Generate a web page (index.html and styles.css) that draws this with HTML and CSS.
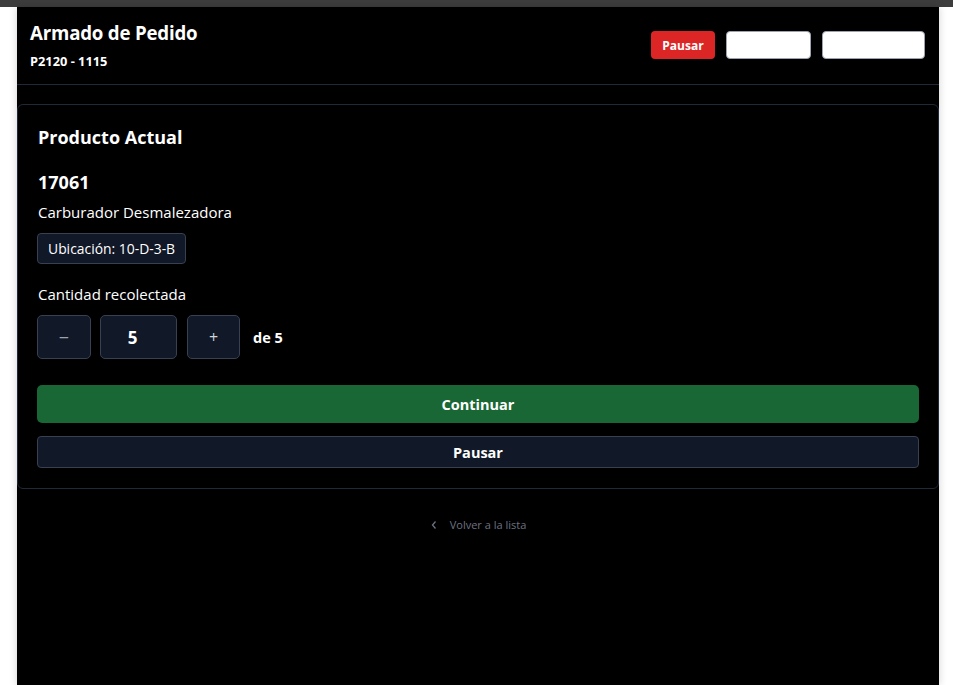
FILE: index.html
```html
<!DOCTYPE html>
<html lang="es">
<head>
<meta charset="utf-8">
<title>Armado de Pedido</title>
<link rel="stylesheet" href="styles.css">
</head>
<body>
<div class="topbar"></div>
<div class="app">
  <header class="header">
    <div class="titles">
      <h1 class="title">Armado de Pedido</h1>
      <div class="subtitle">P2120 - 1115</div>
    </div>
    <div class="actions">
      <button class="btn-red">Pausar</button>
      <button class="btn-white w1"></button>
      <button class="btn-white w2"></button>
    </div>
  </header>
  <main class="main">
    <section class="card">
      <h2 class="card-title">Producto Actual</h2>
      <div class="code">17061</div>
      <div class="desc">Carburador Desmalezadora</div>
      <div class="badge">Ubicación: 10-D-3-B</div>
      <div class="qty-label">Cantidad recolectada</div>
      <div class="qty-row">
        <button class="qbtn minus">−</button>
        <div class="qinput">5</div>
        <button class="qbtn plus">+</button>
        <span class="of">de 5</span>
      </div>
      <button class="btn-continue">Continuar</button>
      <button class="btn-pause">Pausar</button>
    </section>
    <div class="back">
      <svg class="chev" width="8" height="10" viewBox="0 0 8 10"><path d="M5.5 1.5 L2.5 5 L5.5 8.5" fill="none" stroke="#6b7280" stroke-width="1.3"/></svg>
      <span>Volver a la lista</span>
    </div>
  </main>
</div>
</body>
</html>
```
FILE: styles.css
```css
* { box-sizing: border-box; }
html, body { margin: 0; padding: 0; }
body {
  background: #ffffff;
  font-family: "Open Sans", "Noto Sans", sans-serif;
  color: #ffffff;
  height: 685px;
  overflow: hidden;
}
.topbar { height: 7px; background: #3d3d3d; }
.app {
  margin-left: 17px;
  width: 922px;
  height: 678px;
  background: #000000;
  box-shadow: 0 0 8px rgba(0,0,0,0.18);
}
.header {
  display: flex;
  justify-content: space-between;
  align-items: center;
  padding: 12px 14px 13px 13px;
  border-bottom: 1px solid #1f2937;
}
.title { margin: 0; font-size: 18.7px; line-height: 28px; font-weight: 700; letter-spacing: -0.2px; }
.subtitle { margin-top: 4px; font-size: 12.8px; line-height: 20px; font-weight: 700; }
.actions { display: flex; gap: 11px; }
button { font-family: inherit; cursor: pointer; }
.btn-red {
  width: 64px; height: 28px; border: none; border-radius: 4px;
  background: #dc2626; color: #fff; font-size: 12px; font-weight: 700;
}
.btn-white {
  height: 28px; background: #fff; border: 1px solid #9ca3af; border-radius: 4px;
}
.w1 { width: 85px; }
.w2 { width: 103px; }
.main { padding-top: 19px; }
.card {
  border: 1px solid #1f2937;
  border-radius: 6px;
  padding: 18px 19px 20px 19px;
  display: flex;
  flex-direction: column;
  align-items: flex-start;
}
.card-title { margin: 0 0 0 1px; font-size: 18px; line-height: 28px; font-weight: 700; }
.code { margin: 17px 0 0 1px; font-size: 18px; line-height: 28px; font-weight: 700; }
.desc { margin: 4px 0 0 1px; font-size: 15px; line-height: 24px; }
.badge {
  margin-top: 9px;
  height: 31px;
  padding: 0 10px;
  display: flex; align-items: center;
  background: #111827; border: 1px solid #374151; border-radius: 4px;
  font-size: 13.9px;
}
.qty-label { margin: 18px 0 0 1px; font-size: 15px; line-height: 24px; }
.qty-row { margin-top: 9px; display: flex; align-items: center; }
.qbtn, .qinput {
  height: 44px; background: #111827; border: 1px solid #374151; border-radius: 5px;
  display: flex; align-items: center; justify-content: center;
}
.minus { width: 54px; color: #9ca3af; font-size: 18px; }
.qinput { width: 77px; margin-left: 9px; padding-right: 12px; font-size: 17px; font-weight: 700; }
.plus { width: 53px; margin-left: 10px; color: #d1d5db; font-size: 16px; }
.of { margin-left: 13px; font-size: 14.5px; font-weight: 700; }
.btn-continue {
  margin-top: 26px; width: 100%; height: 38px; border: none; border-radius: 5px;
  background: #186734; color: #fff; font-size: 14.5px; font-weight: 700;
}
.btn-pause {
  margin-top: 13px; width: 100%; height: 32px; border: 1px solid #374151; border-radius: 4px;
  background: #111827; color: #fff; font-size: 14.5px; font-weight: 700;
}
.back {
  margin-top: 28px;
  display: flex; justify-content: center; align-items: center; gap: 12px;
  color: #6b7280; font-size: 11px;
}
```
